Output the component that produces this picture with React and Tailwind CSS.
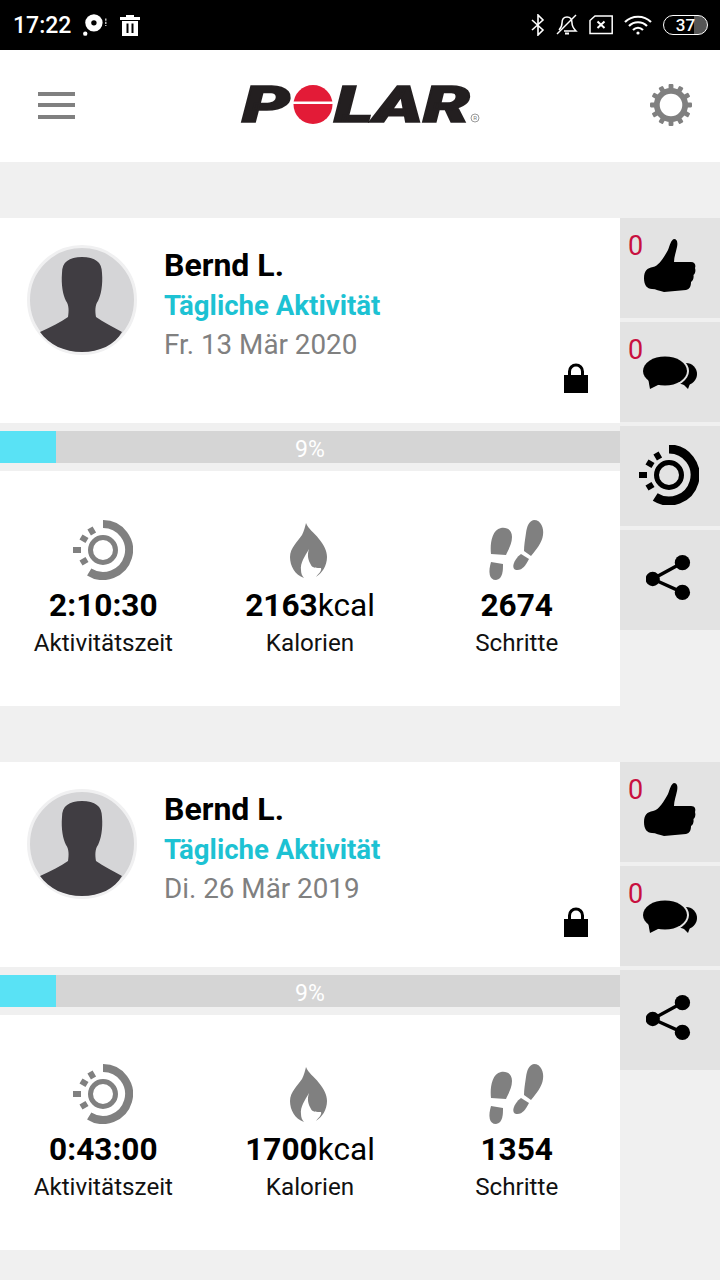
import React from "react";

function ActivityIcon({ color, width, className }) {
  return (
    <svg viewBox="0 0 60 60" className={className} fill="none" stroke={color}>
      <path d="M30 4 A26 26 0 1 1 16.2 52" strokeWidth={width} />
      <circle cx="30" cy="30" r="12.5" strokeWidth="5" />
      <path d="M17 8 L20.5 14 M8 17 L14 20.5 M0 30 L8 30 M8 43 L14 39.5" strokeWidth="6" />
    </svg>
  );
}

function Flame({ className }) {
  return (
    <svg viewBox="0 0 37 55" className={className} fill="#808080">
      <path d="M16 0 C18 6 24 9 29 16 C34 22 37 28 37 34 C37 43 32 50 26 54 C29 50 32 48 31 45 C27 45 22 45 21 42 C18 37 17 32 19 26 C15 33 10 40 11 47 C11 50 12 53 14 55 C5 52 0 43 0 34 C0 25 8 18 12 12 C14 8 15 4 16 0 Z" />
    </svg>
  );
}

function Steps({ className }) {
  return (
    <svg viewBox="0 0 56 60" className={className} fill="#808080">
      <path d="M13 8 C19 7 24 10 24 17 C24 24 20 30 18 35 L3 34 C2 26 3 10 13 8 Z" />
      <path d="M3 42 L15 44 C15 50 15 59 8 60 C1 60 0 52 3 42 Z" />
      <path d="M46 0 C53 0 56 8 55 15 C54 23 48 30 43 36 L36 31 C36 25 37 20 38 13 C39 6 41 1 46 0 Z" />
      <path d="M33 34 L41 39 C38 45 34 51 28 50 C23 49 25 40 33 34 Z" />
    </svg>
  );
}

function ThumbIcon({ className }) {
  return (
    <svg viewBox="0 0 52 54" className={className} fill="#000">
      <path d="M30 0 C33 0 34 3 33 8 C32 13 30 18 30 23 L47 23 C51 23 52 26 51 29 C52 32 51 35 49.5 36 C50 39 49 42 47 43 C47 47 46 50 42 51 L20 53 C15 52 12 50 8 50 C3 50 0 46 0 39 C0 32 3 29 9 28 C15 27 20 18 24 11 C26 6 27 1 30 0 Z" />
    </svg>
  );
}

function ChatIcon({ className }) {
  return (
    <svg viewBox="0 0 56 38" className={className}>
      <ellipse cx="43" cy="21" rx="11" ry="11" fill="#000" />
      <path d="M39 30 L45 36 L48 28 Z" fill="#000" />
      <ellipse cx="22" cy="18" rx="24" ry="16.5" fill="#e3e3e3" />
      <ellipse cx="22" cy="18" rx="22" ry="14.5" fill="#000" />
      <path d="M5 25 L7 36 L17 31 Z" fill="#000" />
    </svg>
  );
}

function ShareIcon({ className }) {
  return (
    <svg viewBox="0 0 48 48" className={className} fill="#000">
      <path d="M38 8 L7 25 L38 39" fill="none" stroke="#000" strokeWidth="3.5" />
      <circle cx="38" cy="8" r="8" />
      <circle cx="7" cy="25" r="7.5" />
      <circle cx="38" cy="39" r="8" />
    </svg>
  );
}

function LockIcon({ className }) {
  return (
    <svg viewBox="0 0 24 30" className={className}>
      <path d="M5.5 14 V8.5 A6.5 6.5 0 0 1 18.5 8.5 V14" fill="none" stroke="#000" strokeWidth="3" />
      <rect x="0" y="12" width="24" height="18" fill="#000" />
    </svg>
  );
}

function Avatar() {
  return (
    <svg viewBox="0 0 110 110" className="w-[110px] h-[110px] shrink-0">
      <circle cx="55" cy="55" r="53.5" fill="#d5d5d7" stroke="#f0f0f1" strokeWidth="3" />
      <path d="M35 28 C35 17 42 12 55 12 C68 12 75 17 75 28 C76 40 74 50 71 56 C68 60 68 66 69 72 C76 77 86 82 95 87 C88 100 72 107 55 107 C38 107 22 100 13 87 C24 82 34 77 41 72 C42 66 42 60 39 56 C36 50 34 40 35 28 Z" fill="#403d42" />
    </svg>
  );
}

function Gear({ className }) {
  const teeth = [0, 30, 60, 90, 120, 150, 180, 210, 240, 270, 300, 330];
  return (
    <svg viewBox="0 0 40 40" className={className}>
      <circle cx="20" cy="20" r="13.5" fill="none" stroke="#808080" strokeWidth="5.5" />
      {teeth.map((a) => (
        <rect key={a} x="17.7" y="0" width="4.6" height="6" rx="1" fill="#808080" transform={`rotate(${a} 20 20)`} />
      ))}
    </svg>
  );
}

function PolarLogo() {
  return (
    <svg viewBox="0 0 240 40" className="w-[240px] h-[40px] overflow-visible">
      <text x="0" y="37" textLength="48" lengthAdjust="spacingAndGlyphs" fontFamily="Roboto" fontWeight="900" fontStyle="italic" fontSize="50" fill="#231f20" stroke="#231f20" strokeWidth="1.5">P</text>
      <circle cx="71" cy="19.5" r="19.5" fill="#e31b37" />
      <rect x="50" y="16.5" width="42" height="2.5" fill="#fff" />
      <text x="92" y="37" textLength="136" lengthAdjust="spacingAndGlyphs" fontFamily="Roboto" fontWeight="900" fontStyle="italic" fontSize="50" fill="#231f20" stroke="#231f20" strokeWidth="1.5">LAR</text>
      <circle cx="233" cy="33" r="4" fill="none" stroke="#808080" strokeWidth="0.8" />
      <text x="233" y="35.2" textAnchor="middle" fontFamily="Roboto" fontSize="6" fill="#808080">R</text>
    </svg>
  );
}

function StatusBar() {
  return (
    <div className="h-[50px] bg-black flex items-center justify-between pl-[13px] pr-[12px] shrink-0">
      <div className="flex items-center">
        <span className="text-white text-[23px] font-medium leading-none">17:22</span>
        <svg viewBox="0 0 24 24" className="w-[26px] h-[26px] ml-[11px]">
          <circle cx="11" cy="10" r="8" fill="#fff" />
          <circle cx="11" cy="10" r="2.5" fill="#000" />
          <circle cx="3" cy="20" r="2" fill="#fff" />
          <path d="M22 6 V13" stroke="#fff" strokeWidth="1" strokeDasharray="2 1" />
        </svg>
        <svg viewBox="0 0 20 22" className="w-[20px] h-[22px] ml-[12px]" fill="#fff">
          <path d="M0 3 H6 V1 H14 V3 H20 V6 H0 Z" />
          <path fillRule="evenodd" d="M2 7 H18 V22 H2 Z M6.5 9.5 V19 H8.5 V9.5 Z M11.5 9.5 V19 H13.5 V9.5 Z" />
        </svg>
      </div>
      <div className="flex items-center">
        <svg viewBox="0 0 14 22" className="w-[14px] h-[22px]" fill="none" stroke="#fff" strokeWidth="1.6">
          <path d="M1 6 L12 16 L7 21 V1 L12 6 L1 16" />
        </svg>
        <svg viewBox="0 0 22 22" className="w-[22px] h-[22px] ml-[11px]" fill="none" stroke="#fff" strokeWidth="1.5">
          <path d="M3 16 C5 14 6 12 6 9 C6 5 8 3 11 3 C14 3 16 5 16 9 C16 12 17 14 20 17 H8" />
          <path d="M9 19.5 H13" strokeWidth="2" />
          <path d="M1 20 L20 1" />
        </svg>
        <svg viewBox="0 0 24 20" className="w-[24px] h-[20px] ml-[11px]" fill="none" stroke="#fff" strokeWidth="1.5">
          <path d="M6 1 H23.2 V18.5 H1 V5.5 Z" />
          <path d="M8.5 6.5 L15.5 13 M15.5 6.5 L8.5 13" strokeWidth="2" />
        </svg>
        <svg viewBox="0 0 28 20" className="w-[28px] h-[20px] ml-[11px]" fill="none" stroke="#fff" strokeWidth="2.2">
          <path d="M1 7 C8 0 20 0 27 7" />
          <path d="M5 11 C10 6 18 6 23 11" />
          <path d="M9 15 C12 12 16 12 19 15" />
          <circle cx="14" cy="18" r="1.6" fill="#fff" stroke="none" />
        </svg>
        <div className="w-[45px] h-[20px] ml-[11px] rounded-full border-[1.5px] border-white flex items-center justify-center overflow-hidden text-white text-[17px] font-medium leading-none bg-[linear-gradient(to_right,#000_70%,#555_70%)]">
          37
        </div>
      </div>
    </div>
  );
}

function Header() {
  return (
    <div className="h-[112px] bg-white flex items-center justify-between pl-[38px] pr-[28px] shrink-0">
      <div className="w-[37px] flex flex-col gap-[7.5px] mb-[2px]">
        <div className="h-[4px] bg-[#808080]" />
        <div className="h-[4px] bg-[#808080]" />
        <div className="h-[4px] bg-[#808080]" />
      </div>
      <div className="mr-[1px] mb-[2px]">
        <PolarLogo />
      </div>
      <Gear className="w-[42px] h-[42px] mb-[2px]" />
    </div>
  );
}

function SideButton({ count, children }) {
  return (
    <div className="h-[100px] bg-[#e3e3e3] flex flex-col">
      {count !== undefined && (
        <span className="absolute ml-[8px] mt-[14px] text-[#c8103f] text-[27px] leading-[28px]">{count}</span>
      )}
      <div className="flex-1 flex items-center justify-center">{children}</div>
    </div>
  );
}

function Stat({ icon, value, unit, label }) {
  return (
    <div className="flex-1 flex flex-col items-center">
      <div className="h-[60px] flex items-center justify-center">{icon}</div>
      <div className="mt-[8px] text-[31.6px] leading-[36px] text-black">
        <span className="font-bold">{value}</span>
        {unit && <span>{unit}</span>}
      </div>
      <div className="mt-[1px] text-[24.2px] leading-[36px] text-[#111]">{label}</div>
    </div>
  );
}

function ActivityCard({ date, time, kcal, steps, showActivity }) {
  return (
    <div className="flex items-start">
      <div className="w-[620px] shrink-0">
        <div className="h-[205px] bg-white flex pl-[27px] pr-[32px] pb-[30px] pt-[27px]">
          <Avatar />
          <div className="flex-1 ml-[27px]">
            <div className="text-[32px] leading-[40px] font-bold text-black">Bernd L.</div>
            <div className="text-[27.6px] leading-[41px] font-bold text-[#1dc2d3]">Tägliche Aktivität</div>
            <div className="text-[27.8px] leading-[37px] text-[#808080]">{date}</div>
          </div>
          <LockIcon className="w-[24px] h-[30px] self-end" />
        </div>
        <div className="h-[48px] py-[8px] bg-[#f0f0f0]">
          <div className="h-[32px] bg-[#d5d5d5] flex items-center justify-center">
            <div className="absolute left-0 w-[56px] h-[32px] bg-[#59e2f5]" />
            <span className="text-white text-[23px] leading-none mt-[4px]">9%</span>
          </div>
        </div>
        <div className="h-[235px] bg-white flex pt-[49px]">
          <Stat icon={<ActivityIcon color="#808080" width="8" className="w-[60px] h-[60px]" />} value={time} label="Aktivitätszeit" />
          <Stat icon={<Flame className="w-[37px] h-[55px] mr-[3px]" />} value={kcal} unit="kcal" label="Kalorien" />
          <Stat icon={<Steps className="w-[58px] h-[60px] mr-[2px]" />} value={steps} label="Schritte" />
        </div>
      </div>
      <div className="flex-1 flex flex-col gap-[4px]">
        <SideButton count={0}>
          <ThumbIcon className="w-[52px] h-[54px] mt-[-5px] ml-[-1px]" />
        </SideButton>
        <SideButton count={0}>
          <ChatIcon className="w-[56px] h-[38px] ml-[2px]" />
        </SideButton>
        {showActivity && (
          <SideButton>
            <ActivityIcon color="#000" width="9" className="w-[60px] h-[60px] ml-[-2px] mt-[-2px]" />
          </SideButton>
        )}
        <SideButton>
          <ShareIcon className="w-[46px] h-[48px] ml-[-2px] mt-[-4px]" />
        </SideButton>
      </div>
    </div>
  );
}

export default function App() {
  return (
    <div className="w-[720px] h-[1280px] overflow-hidden bg-[#f0f0f0] flex flex-col font-['Roboto',sans-serif]">
      <StatusBar />
      <Header />
      <div className="flex flex-col gap-[56px] pt-[56px]">
        <ActivityCard date="Fr. 13 Mär 2020" time="2:10:30" kcal="2163" steps="2674" showActivity />
        <ActivityCard date="Di. 26 Mär 2019" time="0:43:00" kcal="1700" steps="1354" />
      </div>
    </div>
  );
}
